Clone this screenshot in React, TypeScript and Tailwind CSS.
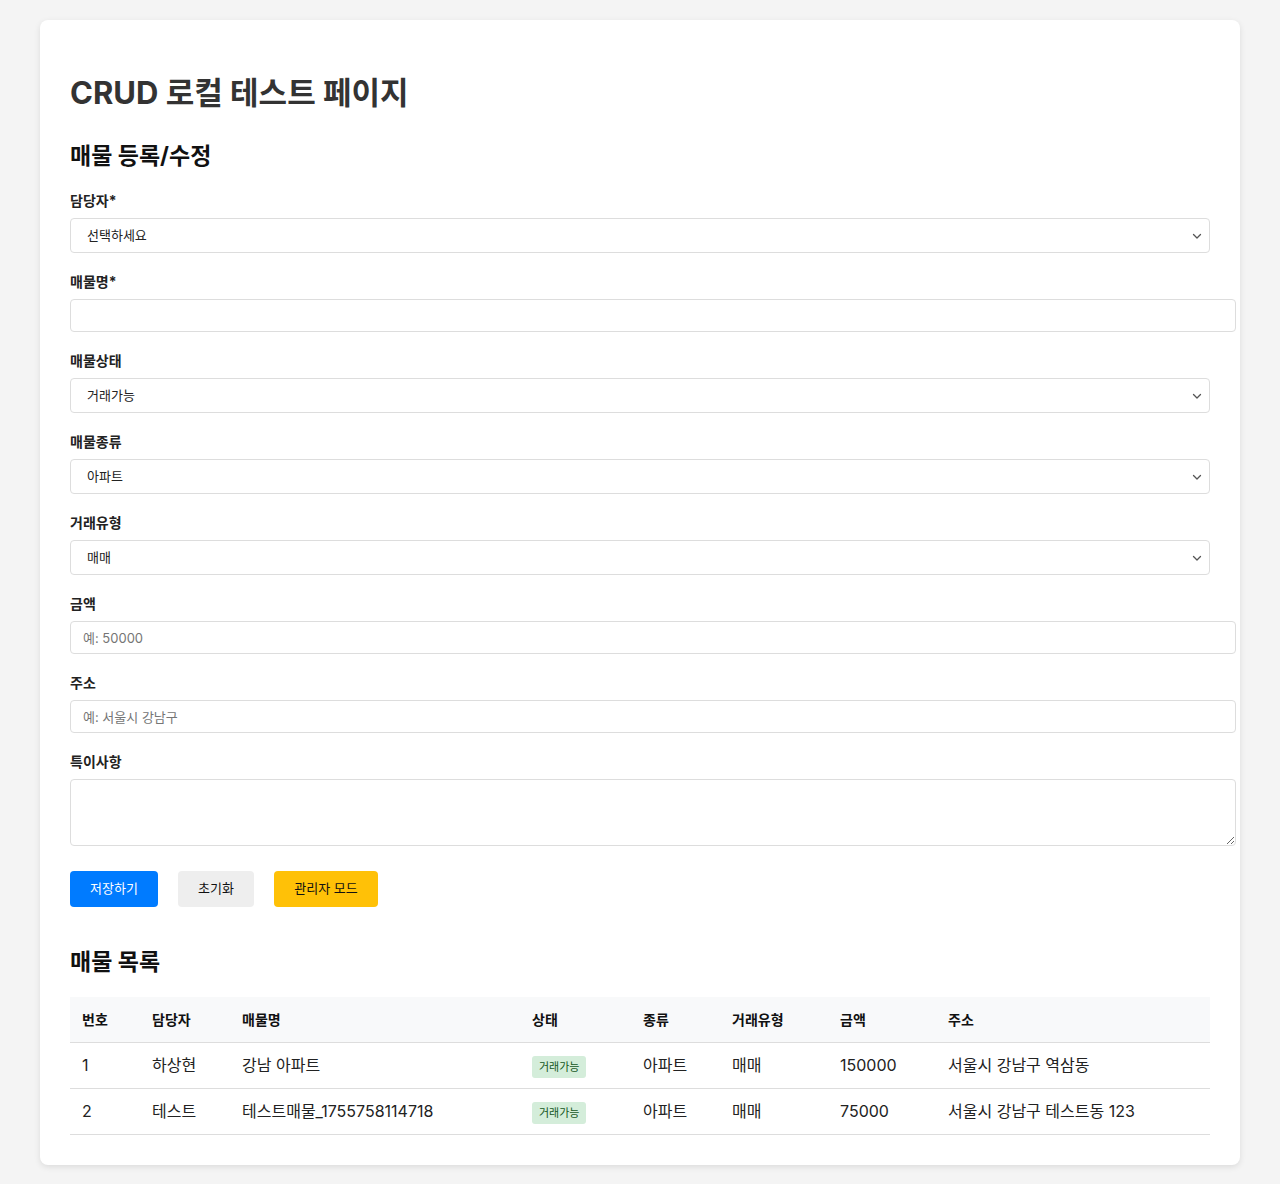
import React from "react";

const font = { fontFamily: "Inter, 'Noto Sans CJK KR', sans-serif" };

function Chevron() {
  return (
    <svg className="pointer-events-none absolute right-[3px] top-1/2 -translate-y-1/2" width="12" height="12" viewBox="0 0 12 12" fill="none">
      <path d="M2.5 4.5L6 8L9.5 4.5" stroke="#555" strokeWidth="1.3" strokeLinecap="round" strokeLinejoin="round" />
    </svg>
  );
}

function SelectField({ label, value, options }: { label: string; value: string; options: string[] }) {
  return (
    <div className="mb-[19px]">
      <label className="block h-[20px] leading-[20px] text-[14px] font-bold text-[#222] mb-[7px]">{label}</label>
      <div className="relative w-full">
        <select
          defaultValue={value}
          className="block w-full h-[35px] appearance-none rounded-[4px] border border-[#dddddd] bg-white pl-[16px] pr-8 text-[13px] text-[#222] outline-none"
        >
          {options.map((o) => (
            <option key={o}>{o}</option>
          ))}
        </select>
        <div className="pointer-events-none absolute right-[4px] top-0 h-full w-[14px]">
          <Chevron />
        </div>
      </div>
    </div>
  );
}

function InputField({ label, placeholder }: { label: string; placeholder?: string }) {
  return (
    <div className="mb-[19px]">
      <label className="block h-[20px] leading-[20px] text-[14px] font-bold text-[#222] mb-[7px]">{label}</label>
      <input
        placeholder={placeholder}
        className="block w-[calc(100%+26px)] h-[33px] rounded-[4px] border border-[#dddddd] bg-white px-[12px] text-[13px] text-[#222] placeholder:text-[#757575] outline-none"
      />
    </div>
  );
}

const rows = [
  { no: "1", agent: "하상현", name: "강남 아파트", status: "거래가능", kind: "아파트", deal: "매매", price: "150000", addr: "서울시 강남구 역삼동" },
  { no: "2", agent: "테스트", name: "테스트매물_1755758114718", status: "거래가능", kind: "아파트", deal: "매매", price: "75000", addr: "서울시 강남구 테스트동 123" },
];

export default function App() {
  return (
    <div className="min-h-[1184px] bg-[#f4f4f4] py-[20px]" style={font}>
      <div className="mx-auto w-[1200px] rounded-[8px] bg-white p-[30px] shadow-[0_2px_6px_rgba(0,0,0,0.1)]">
        <h1 className="mt-[24px] mb-[30px] text-[31px] font-bold leading-[38px] text-[#333]">CRUD 로컬 테스트 페이지</h1>
        <h2 className="mb-[20px] text-[23px] font-bold leading-[29px] text-[#111]">매물 등록/수정</h2>

        <SelectField label="담당자*" value="선택하세요" options={["선택하세요", "하상현", "테스트"]} />
        <InputField label="매물명*" />
        <SelectField label="매물상태" value="거래가능" options={["거래가능", "거래완료"]} />
        <SelectField label="매물종류" value="아파트" options={["아파트", "오피스텔", "빌라"]} />
        <SelectField label="거래유형" value="매매" options={["매매", "전세", "월세"]} />
        <InputField label="금액" placeholder="예: 50000" />
        <InputField label="주소" placeholder="예: 서울시 강남구" />
        <div className="mb-[25px]">
          <label className="block h-[20px] leading-[20px] text-[14px] font-bold text-[#222] mb-[7px]">특이사항</label>
          <textarea className="block w-[calc(100%+26px)] h-[67px] rounded-[4px] border border-[#dddddd] bg-white px-[12px] py-2 text-[13px] outline-none" />
        </div>

        <div className="flex gap-[20px]">
          <button className="h-[36px] w-[88px] rounded-[4px] bg-[#007bff] text-[13px] text-white">저장하기</button>
          <button className="h-[36px] w-[76px] rounded-[4px] bg-[#eeeeee] text-[13px] text-[#111]">초기화</button>
          <button className="h-[36px] w-[104px] rounded-[4px] bg-[#ffc107] text-[13px] text-[#111]">관리자 모드</button>
        </div>

        <h2 className="mt-[41px] mb-[20px] text-[23px] font-bold leading-[29px] text-[#111]">매물 목록</h2>

        <table className="w-full border-collapse text-left">
          <colgroup>
            <col className="w-[70px]" />
            <col className="w-[90px]" />
            <col className="w-[290px]" />
            <col className="w-[111px]" />
            <col className="w-[89px]" />
            <col className="w-[108px]" />
            <col className="w-[108px]" />
            <col />
          </colgroup>
          <thead>
            <tr className="h-[45px] bg-[#f8f9fa] border-b border-[#dddddd]">
              {["번호", "담당자", "매물명", "상태", "종류", "거래유형", "금액", "주소"].map((h) => (
                <th key={h} className="h-[45px] px-[12px] text-[14px] font-bold text-[#111]">{h}</th>
              ))}
            </tr>
          </thead>
          <tbody>
            {rows.map((r) => (
              <tr key={r.no} className="border-b border-[#dddddd] text-[16px] text-[#222]">
                <td className="h-[46px] px-[12px]">{r.no}</td>
                <td className="h-[46px] px-[12px]">{r.agent}</td>
                <td className="h-[46px] px-[12px]">{r.name}</td>
                <td className="h-[46px] px-[12px]">
                  <span className="inline-block rounded-[3px] bg-[#d4edda] px-[7px] py-[3px] text-[11px] leading-[16px] text-[#155724]">{r.status}</span>
                </td>
                <td className="h-[46px] px-[12px]">{r.kind}</td>
                <td className="h-[46px] px-[12px]">{r.deal}</td>
                <td className="h-[46px] px-[12px]">{r.price}</td>
                <td className="h-[46px] px-[12px]">{r.addr}</td>
              </tr>
            ))}
          </tbody>
        </table>
      </div>
    </div>
  );
}
